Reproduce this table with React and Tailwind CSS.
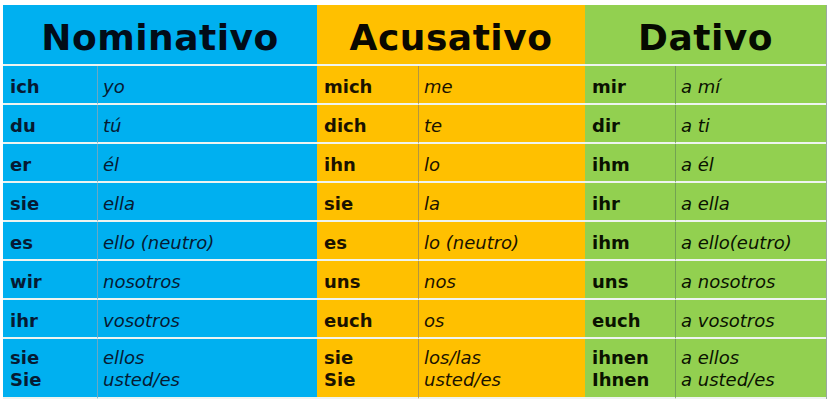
const rows = [
  ['ich', 'yo', 'mich', 'me', 'mir', 'a mí'],
  ['du', 'tú', 'dich', 'te', 'dir', 'a ti'],
  ['er', 'él', 'ihn', 'lo', 'ihm', 'a él'],
  ['sie', 'ella', 'sie', 'la', 'ihr', 'a ella'],
  ['es', 'ello (neutro)', 'es', 'lo (neutro)', 'ihm', 'a ello(eutro)'],
  ['wir', 'nosotros', 'uns', 'nos', 'uns', 'a nosotros'],
  ['ihr', 'vosotros', 'euch', 'os', 'euch', 'a vosotros'],
  [['sie', 'Sie'], ['ellos', 'usted/es'], ['sie', 'Sie'], ['los/las', 'usted/es'], ['ihnen', 'Ihnen'], ['a ellos', 'a usted/es']],
];

const groups = [
  { bg: 'bg-[#00b0f0]', text: 'text-[#061a33]', line: 'border-[#6aa8c4]' },
  { bg: 'bg-[#ffc000]', text: 'text-[#1a1200]', line: 'border-[#b49540]' },
  { bg: 'bg-[#92d050]', text: 'text-[#0a1200]', line: 'border-[#73a352]' },
];

function Cell({ value, group, italic, last }) {
  const g = groups[group];
  const lines = Array.isArray(value) ? value : [value];
  return (
    <div
      className={`${g.bg} ${g.text} flex flex-col justify-center border-b-2 border-b-[#eef4f0] ${
        italic ? `border-l ${g.line} pl-[5px] italic font-normal` : 'pl-[7px] font-bold'
      } ${last ? 'h-[60px] pt-[1px]' : 'h-[39px] pt-[5px]'}`}
    >
      {lines.map((l, i) => (
        <span key={i} className="leading-[22px]">{l}</span>
      ))}
    </div>
  );
}

export default function App() {
  return (
    <div className="w-[831px] h-[404px] bg-white pt-[5px] pl-[3px] font-['DejaVu_Sans',Verdana,sans-serif] text-[18px]">
      <div className="grid grid-cols-[94px_220px_101px_167px_90px_151px] w-[824px] border-r border-r-[#9aa8a0]">
        <div className="col-span-2 h-[61px] pt-[6px] bg-[#00b0f0] text-[#020c18] border-b-2 border-b-[#eef4f0] flex items-center justify-center text-[36px] font-bold tracking-[0.5px]">
          Nominativo
        </div>
        <div className="col-span-2 h-[61px] pt-[6px] bg-[#ffc000] text-[#0a0800] border-b-2 border-b-[#eef4f0] flex items-center justify-center text-[36px] font-bold tracking-[0.5px]">
          Acusativo
        </div>
        <div className="col-span-2 h-[61px] pt-[6px] bg-[#92d050] text-[#050a00] border-b-2 border-b-[#eef4f0] flex items-center justify-center text-[36px] font-bold tracking-[0.5px]">
          Dativo
        </div>
        {rows.map((r, ri) =>
          r.map((v, ci) => (
            <Cell
              key={`${ri}-${ci}`}
              value={v}
              group={Math.floor(ci / 2)}
              italic={ci % 2 === 1}
              last={ri === rows.length - 1}
            />
          ))
        )}
      </div>
    </div>
  );
}
